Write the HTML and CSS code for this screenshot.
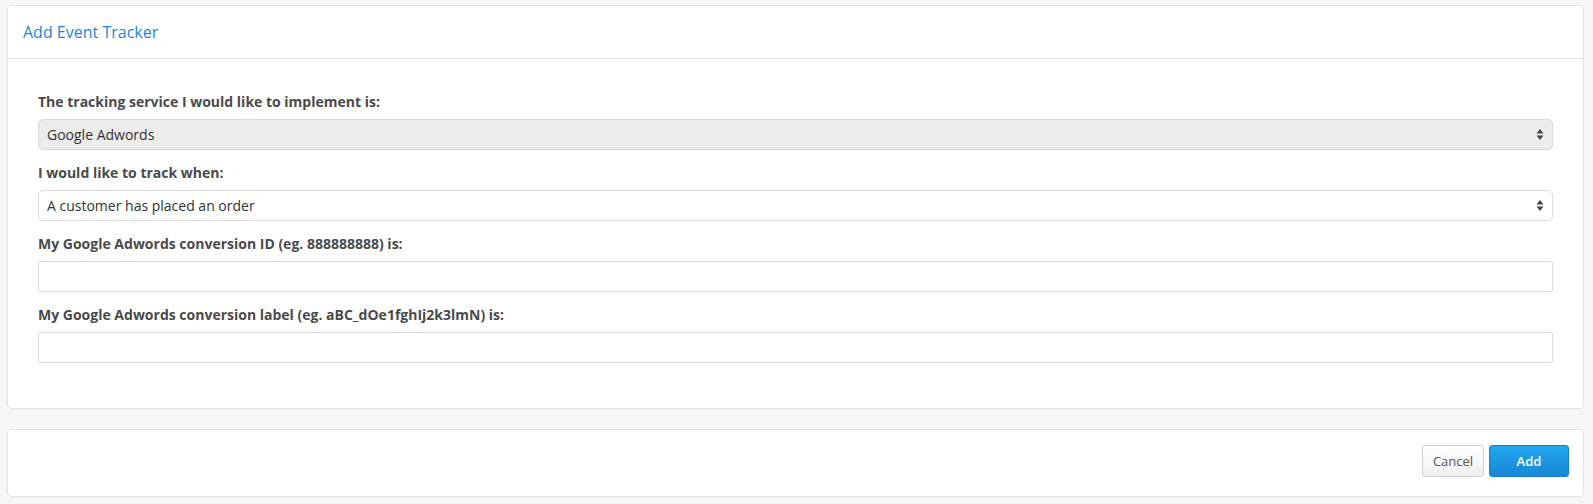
FILE: index.html
```html
<!DOCTYPE html>
<html lang="en">

<head>
    <meta charset="UTF-8">
    <meta name="viewport" content="width=device-width, initial-scale=1.0">
    <title>Add Event Tracker</title>
    <link rel="stylesheet" href="styles.css">
</head>

<body>
    <div class="page">
        <div class="panel">
            <div class="panel-head">
                <h2>Add Event Tracker</h2>
            </div>
            <form class="panel-body" id="trackerform">
                <div class="group">
                    <label for="service">The tracking service I would like to implement is:</label>
                    <div class="select-wrap">
                        <select id="service" class="locked" disabled>
                            <option>Google Adwords</option>
                        </select>
                        <svg class="arrows" width="8" height="11" viewBox="0 0 8 11">
                            <path d="M4 0 L7.5 4.5 H0.5 Z" fill="#444" />
                            <path d="M4 11 L7.5 6.5 H0.5 Z" fill="#444" />
                        </svg>
                    </div>
                </div>
                <div class="group">
                    <label for="event">I would like to track when:</label>
                    <div class="select-wrap">
                        <select id="event">
                            <option>A customer has placed an order</option>
                        </select>
                        <svg class="arrows" width="8" height="11" viewBox="0 0 8 11">
                            <path d="M4 0 L7.5 4.5 H0.5 Z" fill="#444" />
                            <path d="M4 11 L7.5 6.5 H0.5 Z" fill="#444" />
                        </svg>
                    </div>
                </div>
                <div class="group">
                    <label for="convid">My Google Adwords conversion ID (eg. 888888888) is:</label>
                    <input type="text" id="convid" />
                </div>
                <div class="group">
                    <label for="convlabel">My Google Adwords conversion label (eg. aBC_dOe1fghIj2k3lmN) is:</label>
                    <input type="text" id="convlabel" />
                </div>
            </form>
        </div>

        <div class="panel actions">
            <button type="button" class="btn btn-cancel">Cancel</button>
            <button type="submit" form="trackerform" class="btn btn-add">Add</button>
        </div>
    </div>
</body>

</html>
```

FILE: styles.css
```css
body {
    margin: 0;
    background-color: #f6f6f6;
    font-family: "Open Sans", Arial, sans-serif;
    color: #333;
}

.page {
    padding: 5px 9px 0 7px;
}

.panel {
    background-color: #fff;
    border: 1px solid #e3e3e3;
    border-radius: 4px;
}

.panel-head {
    height: 52px;
    padding-left: 15px;
    border-bottom: 1px solid #e3e3e3;
    display: flex;
    align-items: center;
}

.panel-head h2 {
    margin: 0;
    font-size: 16px;
    font-weight: normal;
    color: #1a87d8;
}

.panel-body {
    padding: 34px 30px 31px 30px;
}

.group {
    margin-bottom: 14px;
}

.group label {
    display: block;
    font-size: 14px;
    line-height: 18px;
    font-weight: bold;
    color: #4a4a4a;
    margin-bottom: 8px;
}

.select-wrap {
    position: relative;
}

select,
input[type="text"] {
    display: block;
    width: 100%;
    height: 31px;
    box-sizing: border-box;
    border: 1px solid #dcdcdc;
    font-family: "Open Sans", Arial, sans-serif;
    font-size: 14px;
    color: #333;
    background-color: #fff;
}

select {
    appearance: none;
    -webkit-appearance: none;
    padding: 0 8px;
    border-radius: 5px;
}

select.locked {
    background-color: #ececec;
    border-color: #dadada;
    opacity: 1;
}

input[type="text"] {
    padding: 0 8px;
    border-radius: 2px;
}

.arrows {
    position: absolute;
    right: 9px;
    top: 10px;
    pointer-events: none;
}

.actions {
    margin-top: 20px;
    padding: 15px 14px 19px;
    display: flex;
    justify-content: flex-end;
    gap: 5px;
}

.btn {
    height: 32px;
    border-radius: 3px;
    font-family: "Open Sans", Arial, sans-serif;
    font-size: 13px;
    cursor: pointer;
}

.btn-cancel {
    width: 62px;
    color: #555;
    border: 1px solid #cfcfcf;
    background: linear-gradient(#ffffff, #efefef);
}

.btn-add {
    width: 80px;
    color: #fff;
    font-weight: 600;
    border: 1px solid #1780c9;
    background: linear-gradient(#22a5ef, #1888d5);
}
```
